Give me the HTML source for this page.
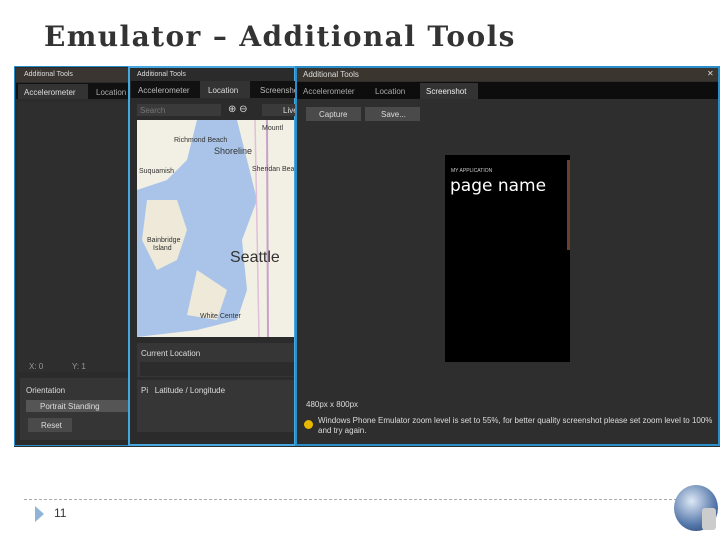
<!DOCTYPE html>
<html><head><style>
body{margin:0;width:720px;height:540px;background:#fff;position:relative;overflow:hidden;font-family:"Liberation Sans",sans-serif;}
.a{position:absolute;}
.t{color:#ddd;font-size:8px;}
</style></head><body>
<div class="a" style="left:44px;top:20px;font-family:'DejaVu Serif',serif;font-size:28px;font-weight:bold;color:#333;white-space:nowrap;letter-spacing:1.4px">Emulator – Additional Tools</div>

<div class="a" style="left:14px;top:66px;width:706px;height:380px;background:#2d2d2d;border-top:1px solid #3ab;"></div>

<div class="a" style="left:14px;top:66px;width:116px;height:380px;background:#2b2b2b;border:1px solid #2a8fc8;box-sizing:border-box"></div>
<div class="a" style="left:16px;top:68px;width:114px;height:14px;background:#3a3530"></div>
<div class="a t" style="left:24px;top:71px;font-size:7px">Additional Tools</div>
<div class="a" style="left:16px;top:83px;width:114px;height:16px;background:#111"></div>
<div class="a" style="left:18px;top:84px;width:70px;height:15px;background:#333"></div>
<div class="a t" style="left:24px;top:88px">Accelerometer</div>
<div class="a t" style="left:96px;top:88px;color:#aaa">Location</div>
<div class="a" style="left:18px;top:102px;width:112px;height:270px;background:#2e2e2e"></div>
<div class="a t" style="left:29px;top:362px;color:#999">X: 0 &nbsp; &nbsp; &nbsp; &nbsp; &nbsp; &nbsp; Y: 1</div>
<div class="a" style="left:20px;top:378px;width:110px;height:62px;background:#353535"></div>
<div class="a t" style="left:26px;top:386px">Orientation</div>
<div class="a" style="left:26px;top:400px;width:104px;height:12px;background:#555"></div>
<div class="a t" style="left:40px;top:402px">Portrait Standing</div>
<div class="a" style="left:28px;top:418px;width:44px;height:14px;background:#4a4a4a"></div>
<div class="a t" style="left:41px;top:421px">Reset</div>

<div class="a" style="left:128px;top:66px;width:168px;height:380px;background:#2b2b2b;border:2px solid #45a8e0;box-sizing:border-box"></div>
<div class="a t" style="left:137px;top:71px;font-size:7px">Additional Tools</div>
<div class="a" style="left:131px;top:81px;width:164px;height:17px;background:#111"></div>
<div class="a" style="left:200px;top:81px;width:50px;height:17px;background:#333"></div>
<div class="a t" style="left:138px;top:86px;color:#bbb">Accelerometer</div>
<div class="a t" style="left:208px;top:86px">Location</div>
<div class="a t" style="left:260px;top:86px;color:#bbb">Screenshot</div>
<div class="a" style="left:137px;top:104px;width:84px;height:12px;background:#3a3a3a"></div>
<div class="a t" style="left:140px;top:106px;color:#777">Search</div>
<div class="a t" style="left:228px;top:104px;font-size:10px">⊕ ⊖</div>
<div class="a" style="left:262px;top:104px;width:33px;height:12px;background:#3a3a3a"></div>
<div class="a t" style="left:283px;top:106px">Live</div>
<svg class="a" style="left:137px;top:120px" width="157" height="217">
<rect width="157" height="217" fill="#f2efe4"/>
<path d="M0 70 L30 60 L50 40 L60 0 L100 0 L110 40 L120 80 L105 120 L110 170 L100 200 L60 210 L0 217 Z" fill="#a9c4e8"/>
<path d="M10 80 L40 80 L50 110 L40 140 L20 150 L5 120 Z" fill="#eee9d8"/>
<path d="M60 150 L90 170 L80 200 L50 195 Z" fill="#eee9d8"/>
<path d="M130 0 L131 217" stroke="#c9a0c9" stroke-width="2"/>
<path d="M118 0 L122 217" stroke="#e0c0d8" stroke-width="1.5"/>
<text x="37" y="22" font-size="7" fill="#333">Richmond Beach</text>
<text x="77" y="34" font-size="9" fill="#333">Shoreline</text>
<text x="2" y="53" font-size="7" fill="#333">Suquamish</text>
<text x="125" y="10" font-size="7" fill="#333">Mountl</text>
<text x="115" y="51" font-size="7" fill="#333">Sheridan Beac</text>
<text x="10" y="122" font-size="7" fill="#333">Bainbridge</text>
<text x="16" y="130" font-size="7" fill="#333">Island</text>
<text x="93" y="142" font-size="16" fill="#333">Seattle</text>
<text x="63" y="198" font-size="7" fill="#333">White Center</text>
</svg>
<div class="a" style="left:137px;top:343px;width:157px;height:34px;background:#363636"></div>
<div class="a t" style="left:141px;top:349px">Current Location</div>
<div class="a" style="left:140px;top:362px;width:154px;height:14px;background:#2c2c2c"></div>
<div class="a" style="left:137px;top:380px;width:157px;height:52px;background:#363636"></div>
<div class="a t" style="left:141px;top:386px">Pi &nbsp; Latitude / Longitude</div>

<div class="a" style="left:295px;top:66px;width:425px;height:380px;background:#2e2e2e;border:2px solid #2a8fc8;box-sizing:border-box"></div>
<div class="a" style="left:297px;top:68px;width:421px;height:13px;background:#3b3530"></div>
<div class="a t" style="left:303px;top:70px">Additional Tools</div>
<div class="a t" style="left:707px;top:69px">✕</div>
<div class="a" style="left:297px;top:82px;width:421px;height:17px;background:#0d0d0d"></div>
<div class="a" style="left:420px;top:83px;width:58px;height:16px;background:#333"></div>
<div class="a t" style="left:303px;top:87px;color:#aaa">Accelerometer</div>
<div class="a t" style="left:375px;top:87px;color:#aaa">Location</div>
<div class="a t" style="left:426px;top:87px;color:#eee">Screenshot</div>
<div class="a" style="left:306px;top:107px;width:55px;height:14px;background:#4a4a4a"></div>
<div class="a" style="left:365px;top:107px;width:55px;height:14px;background:#4a4a4a"></div>
<div class="a t" style="left:319px;top:110px">Capture</div>
<div class="a t" style="left:381px;top:110px">Save...</div>
<div class="a" style="left:445px;top:155px;width:125px;height:207px;background:#000"></div>
<div class="a" style="left:567px;top:160px;width:3px;height:90px;background:#6a4030"></div>
<div class="a" style="left:451px;top:168px;color:#ccc;font-size:5px">MY APPLICATION</div>
<div class="a" style="left:450px;top:176px;color:#fff;font-size:17px;font-family:'DejaVu Sans',sans-serif">page name</div>
<div class="a t" style="left:306px;top:400px">480px x 800px</div>
<div class="a" style="left:304px;top:420px;width:9px;height:9px;border-radius:50%;background:#e8b800"></div>
<div class="a t" style="left:318px;top:416px;width:395px;line-height:10px">Windows Phone Emulator zoom level is set to 55%, for better quality screenshot please set zoom level to 100% and try again.</div>

<div class="a" style="left:24px;top:499px;width:668px;border-top:1px dashed #aaa"></div>
<div class="a" style="left:35px;top:506px;width:0;height:0;border-left:9px solid #8fb4d8;border-top:8px solid transparent;border-bottom:8px solid transparent"></div>
<div class="a" style="left:54px;top:506px;font-size:12px;color:#333">11</div>
<div class="a" style="left:674px;top:485px;width:44px;height:46px;border-radius:50%;background:radial-gradient(circle at 40% 35%,#dde8f5,#5577aa 60%,#223a66)"></div>
<div class="a" style="left:702px;top:508px;width:14px;height:22px;background:#ccc;border-radius:3px"></div>
</body></html>
